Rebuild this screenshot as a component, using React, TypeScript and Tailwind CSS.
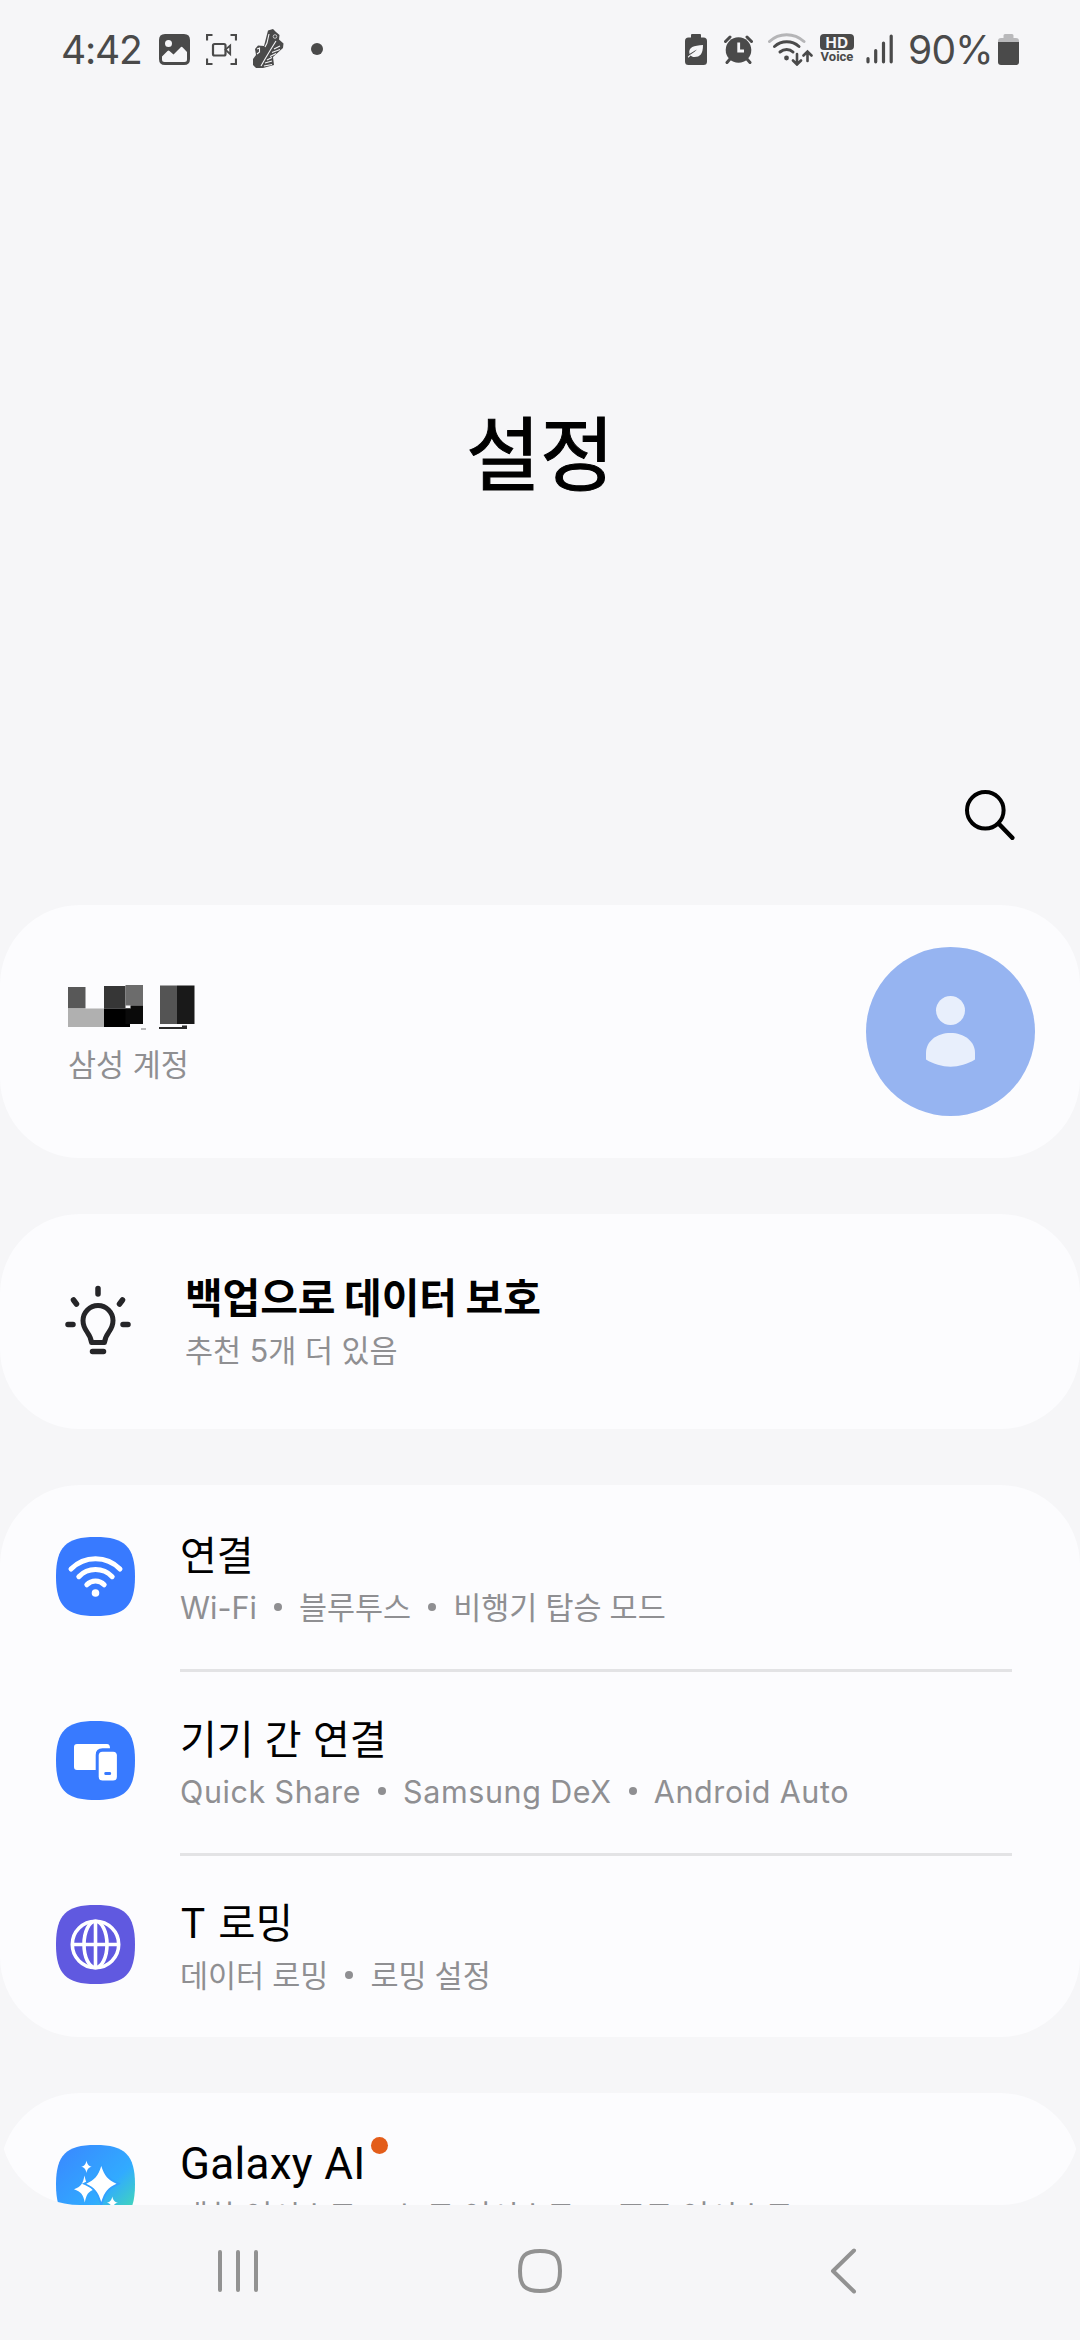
import type { ReactNode } from "react";

const SQUIRCLE = "M39.5 0C69 0 79 10 79 39.5S69 79 39.5 79 0 69 0 39.5 10 0 39.5 0Z";

const StatusLeft = () => (
  <div className="flex items-center">
    <span className="w-[98px] text-[39px] leading-none tracking-[-1.2px]">4:42</span>
    {/* gallery */}
    <svg width="31" height="31" viewBox="0 0 31 31">
      <path
        fillRule="evenodd"
        fill="currentColor"
        d="M6 0H25Q31 0 31 6V25Q31 31 25 31H6Q0 31 0 25V6Q0 0 6 0ZM9.5 6A3.5 3.5 0 1 0 9.5 13 3.5 3.5 0 1 0 9.5 6ZM3 22.5V25.5Q3 28 5.5 28H25.5Q28 28 28 25.5V18L23.5 13.2Q22.5 12.4 21.5 13.4L14.5 20.5 10.5 17Q9.5 16.2 8.5 17Z"
      />
    </svg>
    {/* screen recorder */}
    <svg className="ml-4" width="31" height="31" viewBox="0 0 31 31" fill="none" stroke="currentColor" strokeWidth="2.2">
      <path d="M1 6.5V1H6.5M24.5 1H30V6.5M30 24.5V30H24.5M6.5 30H1V24.5" />
      <rect x="7" y="10" width="12.5" height="11.5" rx="1.5" />
      <path d="M19.5 15.7L24.2 11.5V20.2Z" strokeWidth="1.8" />
    </svg>
    {/* running shoe */}
    <svg className="ml-4" width="31" height="40" viewBox="0 0 31 40">
      <path fill="currentColor" d="M15 1.5L20 0 23 3 26.5 6 26 10.5 30.5 14.5 30 19 20 28 21 36 10 39H3L0 36V30L3 26 2 20 5 16.5 11 17Z" />
      <path
        d="M16 5L14 14 12 18M23 12L18 20 12 30 8 37M27 17L21 20M27 20.5L19 23.5M23 24.5L17 27.5M19 28.5L14 31M19 32L12 34M19 35.5L11 37M4 20L6.5 19V23L4 25"
        fill="none"
        stroke="#f6f6f8"
        strokeWidth="1.1"
      />
      <circle cx="22" cy="7.5" r="1.8" fill="none" stroke="#f6f6f8" strokeWidth="0.7" />
    </svg>
    <span className="ml-[27px] size-3 rounded-full bg-current" />
  </div>
);

const StatusRight = () => (
  <div className="flex items-center">
    {/* battery saver */}
    <svg width="22" height="31" viewBox="0 0 22 31">
      <path fill="currentColor" d="M7 0H15Q16 0 16 1V3.5H18.5Q22 3.5 22 7V27.5Q22 31 18.5 31H3.5Q0 31 0 27.5V7Q0 3.5 3.5 3.5H6V1Q6 0 7 0Z" />
      <path fill="#f6f6f8" d="M18 11C18 20 15 23 9.5 23 7.5 23 6.3 22.3 5.6 21.5L3.5 23.8 2.8 22.8C5 20 9 19 12 15.5 8.5 17.5 6.5 18.5 4.5 20 3 13 9 11.5 18 11Z" />
    </svg>
    {/* alarm */}
    <svg className="ml-[17px]" width="29" height="29" viewBox="0 0 29 29">
      <circle cx="14.5" cy="15" r="12.8" fill="currentColor" />
      <path d="M1.5 6.5L6 2M27.5 6.5L23 2M6 24L3 27.5M23 24L26 27.5" stroke="currentColor" strokeWidth="3" strokeLinecap="round" />
      <path d="M14.7 7.5V16H20" fill="none" stroke="#f6f6f8" strokeWidth="2.8" />
    </svg>
    {/* wifi with traffic arrows */}
    <svg className="ml-[15px]" width="45" height="33" viewBox="0 0 45 33" fill="none" stroke="currentColor" strokeWidth="3" strokeLinecap="round">
      <path d="M1.5 8.5C11 -0.6 26 -0.6 36 8.5" stroke="#b5b5b7" />
      <path d="M6.5 13.5C13.5 7.2 24 7.2 31 13.5M12 19C16 15.7 21.5 15.7 25 19" />
      <circle cx="18.5" cy="25" r="2.4" fill="currentColor" stroke="none" />
      <path d="M29 21V31M25 27.5L29 31.5 33 27.5M39.5 28V19M35.5 22.5L39.5 18.5 43.5 22.5" strokeWidth="2.6" />
    </svg>
    <div className="ml-[7px] flex w-[34px] flex-col items-center">
      <span className="flex h-4 w-[34px] items-center justify-center rounded-[4px] bg-[#4a4a4a] font-['Inter'] text-[15px] leading-none font-bold tracking-[0.5px] text-[#f6f6f8]">
        HD
      </span>
      <span className="font-['Roboto'] text-[13px] leading-[14px] font-bold">Voice</span>
    </div>
    {/* signal */}
    <svg className="ml-3" width="28" height="30" viewBox="0 0 28 30" stroke="currentColor" strokeWidth="3.2" strokeLinecap="round">
      <path d="M2 24.5V27.8M9.7 16.5V27.8M17.5 9V27.8M25.2 2V27.8" />
    </svg>
    <span className="ml-[14px] w-[90px] text-[39px] leading-none tracking-[-0.8px]">90%</span>
    <svg width="21" height="31" viewBox="0 0 21 31">
      <path fill="#b9b9bb" d="M7 0H14Q15.5 0 15.5 1.5V4H18Q21 4 21 7V9H0V7Q0 4 3 4H5.5V1.5Q5.5 0 7 0Z" />
      <path fill="currentColor" d="M0 8H21V28Q21 31 18 31H3Q0 31 0 28Z" />
    </svg>
  </div>
);

// Account name hidden behind a mosaic
const MaskedName = () => (
  <svg width="127" height="45" viewBox="0 0 127 45">
    <path fill="#585858" d="M0 2H17.5V23.5H0Z" />
    <path fill="#b0b0b0" d="M0 23.5H36V42H0Z" />
    <path fill="#363636" d="M36 1H57.5V23.5H36Z" />
    <path fill="#6c6c6c" d="M57.5 0H75V20.5H57.5Z" />
    <path fill="#000" d="M36 23.5H62V42H36Z" />
    <path fill="#0a0a0a" d="M57.5 23.5H62.5V20.5H75V39H57.5Z" />
    <path fill="#545454" d="M92 0.5H109V39H92Z" />
    <path fill="#191919" d="M109 0.5H126.5V39H109Z" />
    <path fill="#2a2a2a" d="M91 42H114V40.5H119V44H91Z" />
    <path fill="#777" d="M73 43.5H78V44.5H73Z" />
  </svg>
);

const ConnectionsIcon = () => (
  <svg width="79" height="79" viewBox="0 0 79 79" fill="none" stroke="#fff" strokeWidth="5" strokeLinecap="round">
    <path d={SQUIRCLE} fill="#387aff" stroke="none" />
    <path d="M15 32A34.3 34.3 0 0 1 64 32M22.8 39.7A23.1 23.1 0 0 1 56.2 39.7M30.8 47.8A12 12 0 0 1 48.2 47.8" />
    <circle cx="39.5" cy="56" r="3.8" fill="#fff" stroke="none" />
  </svg>
);

const DevicesIcon = () => (
  <svg width="79" height="79" viewBox="0 0 79 79">
    <path d={SQUIRCLE} fill="#387aff" />
    <path fill="#fff" d="M21 23H51Q54 23 54 27.3H46.5Q39.7 27.3 39.7 34V49H21Q18 49 18 46V26Q18 23 21 23Z" />
    <rect x="42.7" y="30.7" width="18.2" height="28.8" rx="3.8" fill="#fff" />
    <rect x="48.3" y="51" width="6.8" height="3" rx="1.3" fill="#387aff" />
  </svg>
);

const RoamingIcon = () => (
  <svg width="79" height="79" viewBox="0 0 79 79" fill="none" stroke="#fff" strokeWidth="3.6">
    <path d={SQUIRCLE} fill="#6059e0" stroke="none" />
    <circle cx="39.5" cy="39.5" r="23.2" />
    <ellipse cx="39.5" cy="39.5" rx="11.5" ry="23.2" />
    <path d="M39.5 16V63M16 39.5H63" />
  </svg>
);

const GalaxyAIIcon = () => (
  <svg width="79" height="79" viewBox="0 0 79 79" fill="#fff">
    <defs>
      <linearGradient id="ai" x1="0" y1="0" x2="1" y2="1">
        <stop offset="0" stopColor="#3a86ff" />
        <stop offset="0.6" stopColor="#31abff" />
        <stop offset="0.85" stopColor="#3fd0c4" />
      </linearGradient>
    </defs>
    <path d={SQUIRCLE} fill="url(#ai)" />
    <path d="M30.5 15.5C31.3 19.5 32.5 21 35.8 21.8 32.5 22.6 31.3 24 30.5 28 29.7 24 28.5 22.6 25.2 21.8 28.5 21 29.7 19.5 30.5 15.5Z" />
    <path d="M28.5 30.5C30 38.5 32 42 38.5 44.3 32 46.5 30.3 50 28.8 57.5 27.3 50 25 46.5 18 44.3 25 42 27 38.5 28.5 30.5Z" />
    <path
      d="M45.3 21C48.5 31 52 35 60.5 38.7 52 42.5 48.5 46.5 45.3 57 42.1 46.5 38.7 42.5 30.2 38.7 38.7 35 42.1 31 45.3 21Z"
      stroke="#32a0ff"
      strokeWidth="3.5"
      paintOrder="stroke"
    />
    <path d="M56.3 51.5C57.2 55.5 58.5 57 62 57.8 58.5 58.6 57.2 60 56.3 64 55.4 60 54.2 58.6 50.7 57.8 54.2 57 55.4 55.5 56.3 51.5Z" />
  </svg>
);

interface RowProps {
  icon: ReactNode;
  title: string;
  titleClass?: string;
  items: string[];
  itemsClass?: string;
  divider?: boolean;
  badge?: boolean;
}

const Row = ({ icon, title, titleClass = "text-[40px]", items, itemsClass = "", divider, badge }: RowProps) => (
  <div className="flex h-[184px] pr-[68px] pl-14">
    <div className="flex w-[124px] shrink-0 items-center pb-px">{icon}</div>
    <div className={`flex flex-1 flex-col justify-center ${divider ? "border-t-[3px] border-[#e3e3e5] pb-[3px]" : ""}`}>
      <div className={`flex leading-[60px] whitespace-nowrap text-black ${titleClass}`}>
        {title}
        {badge && <span className="mt-[3px] ml-[6px] size-[17px] rounded-full bg-[#e35d1a]" />}
      </div>
      <div className={`flex text-[30.5px] leading-[43px] whitespace-nowrap text-[#8f8f92] ${itemsClass}`}>
        {items.map((item, i) => (
          <span key={item} className="flex items-center [word-spacing:-0.5px]">
            {i > 0 && <span className="mx-[17px] size-2 rounded-full bg-[#8f8f92]" />}
            {item}
          </span>
        ))}
      </div>
    </div>
  </div>
);

const Card = ({ className = "", children }: { className?: string; children: ReactNode }) => (
  <section className={`shrink-0 overflow-hidden rounded-[80px] bg-[#fcfcfe] ${className}`}>{children}</section>
);

export default function App() {
  return (
    <div className="flex h-[2340px] w-[1080px] flex-col overflow-hidden bg-[#f6f6f8] font-['Inter','Noto_Sans_CJK_KR',sans-serif]">
      <header className="flex h-[98px] shrink-0 items-center justify-between pr-[61px] pl-[61px] text-[#4a4a4a]">
        <StatusLeft />
        <StatusRight />
      </header>

      <div className="flex h-[714px] shrink-0 items-center justify-center">
        <h1 className="text-[81px] leading-none tracking-[-0.5px] text-black [-webkit-text-stroke:1px_black]">설정</h1>
      </div>
      <div className="flex h-[93px] shrink-0 justify-end pr-[65px]">
        <svg className="-mt-[22px]" width="50" height="50" viewBox="0 0 50 50" fill="none" stroke="#000" strokeLinecap="round">
          <circle cx="20.3" cy="20.3" r="18.3" strokeWidth="4" />
          <path d="M34 34L47.3 47.8" strokeWidth="4.5" />
        </svg>
      </div>

      <main className="flex h-[1300px] shrink-0 flex-col gap-14 overflow-hidden rounded-b-[80px]">
        <Card className="flex h-[253px] items-center justify-between pr-[45px] pl-[68px]">
          <div className="flex flex-col gap-[13px] pt-2">
            <MaskedName />
            <span className="text-[30.5px] leading-[43px] text-[#8f8f92]">삼성 계정</span>
          </div>
          <svg width="169" height="169" viewBox="0 0 169 169">
            <circle cx="84.5" cy="84.5" r="84.5" fill="#96b4f1" />
            <circle cx="84.5" cy="63.5" r="14.5" fill="#e8effc" />
            <path fill="#e8effc" d="M60 106C60 94 71 86 84.5 86S109 94 109 106V112.5C94 122 75 122 60 112.5Z" />
          </svg>
        </Card>

        <Card className="flex h-[215px] items-center pb-[3px] pl-[65px]">
          <svg width="66" height="78" viewBox="0 0 66 78" fill="none" stroke="#252528" strokeWidth="5" strokeLinecap="round" strokeLinejoin="round">
            <path d="M33 7.5V13M8.5 19L11.5 23M57.5 19L54.5 23M3 43.5H8M58 43.5H63M27.5 70.5H38.5" strokeWidth="5.5" />
            <path d="M26.5 61.5C25.5 51 18 50.5 18 39.5A15 15 0 0 1 48 39.5C48 50.5 40.5 51 39.5 61.5Z" />
          </svg>
          <div className="ml-[54px] flex flex-col pb-px">
            <span className="text-[41px] leading-[61px] font-bold tracking-[-0.1px] text-black [word-spacing:-1px]">백업으로 데이터 보호</span>
            <span className="text-[30.5px] leading-[43px] text-[#8f8f92]">추천 5개 더 있음</span>
          </div>
        </Card>

        <Card>
          <Row icon={<ConnectionsIcon />} title="연결" items={["Wi-Fi", "블루투스", "비행기 탑승 모드"]} />
          <Row
            icon={<DevicesIcon />}
            title="기기 간 연결"
            items={["Quick Share", "Samsung DeX", "Android Auto"]}
            itemsClass="tracking-[0.6px]"
            divider
          />
          <Row icon={<RoamingIcon />} title="T 로밍" titleClass="text-[40.5px] tracking-[0.3px]" items={["데이터 로밍", "로밍 설정"]} divider />
        </Card>

        <Card>
          <Row
            icon={<GalaxyAIIcon />}
            title="Galaxy AI"
            titleClass="font-['Roboto'] text-[44px] tracking-[0.3px]"
            items={["대화 어시스트", "노트 어시스트", "포토 어시스트"]}
            badge
          />
        </Card>
      </main>

      <nav className="flex h-[135px] items-center justify-between pr-[223px] pb-[3px] pl-[218px]">
        <svg width="40" height="44" viewBox="0 0 40 44" stroke="#929292" strokeWidth="4" strokeLinecap="round">
          <path d="M2 3V41M20 3V41M38 3V41" />
        </svg>
        <svg className="mr-2" width="44" height="44" viewBox="0 0 44 44" fill="none" stroke="#929292" strokeWidth="4">
          <path d="M22 2C37 2 42 7 42 22S37 42 22 42 2 37 2 22 7 2 22 2Z" />
        </svg>
        <svg width="27" height="46" viewBox="0 0 27 46" fill="none" stroke="#929292" strokeWidth="4" strokeLinecap="round" strokeLinejoin="round">
          <path d="M24 2.5L3 23 24 43.5" />
        </svg>
      </nav>
    </div>
  );
}
